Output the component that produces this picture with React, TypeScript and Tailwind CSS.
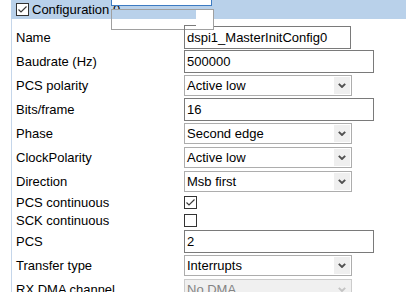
import type { ReactNode } from "react";

type Field =
  | { kind: "text"; label: string; value: string; short?: boolean }
  | { kind: "select"; label: string; value: string; disabled?: boolean }
  | { kind: "check"; label: string; checked: boolean };

const fields: Field[] = [
  { kind: "text", label: "Name", value: "dspi1_MasterInitConfig0", short: true },
  { kind: "text", label: "Baudrate (Hz)", value: "500000" },
  { kind: "select", label: "PCS polarity", value: "Active low" },
  { kind: "text", label: "Bits/frame", value: "16" },
  { kind: "select", label: "Phase", value: "Second edge" },
  { kind: "select", label: "ClockPolarity", value: "Active low" },
  { kind: "select", label: "Direction", value: "Msb first" },
  { kind: "check", label: "PCS continuous", checked: true },
  { kind: "check", label: "SCK continuous", checked: false },
  { kind: "text", label: "PCS", value: "2" },
  { kind: "select", label: "Transfer type", value: "Interrupts" },
  { kind: "select", label: "RX DMA channel", value: "No DMA", disabled: true },
];

const Tick = () => (
  <svg width="11" height="11" viewBox="0 0 11 11" className="block">
    <polyline points="1.5,5.5 4,8 9.5,2.5" fill="none" stroke="#3a3a3a" strokeWidth="1.2" />
  </svg>
);

const CheckBox = ({ checked }: { checked: boolean }) => (
  <div className="flex h-[13px] w-[13px] items-center justify-center border border-[#333333] bg-white">
    {checked && <Tick />}
  </div>
);

const Chevron = ({ color }: { color: string }) => (
  <svg width="8" height="5" viewBox="0 0 8 5" className="block">
    <polyline points="0.8,0.8 4,4 7.2,0.8" fill="none" stroke={color} strokeWidth="1.9" />
  </svg>
);

const TextBox = ({ value, short }: { value: string; short?: boolean }) => (
  <div
    className={`flex h-[23px] items-center border border-[#7a7a7a] bg-white px-[2px] text-black ${
      short ? "w-[167px]" : "w-[190px]"
    }`}
  >
    {value}
  </div>
);

const SelectBox = ({ value, disabled }: { value: string; disabled?: boolean }) => (
  <div
    className={`flex h-[21px] w-[168px] items-center justify-between border pl-[2px] ${
      disabled ? "border-[#cccccc] bg-[#f0f0f0] text-[#838383]" : "border-[#adadad] bg-white text-black"
    }`}
  >
    <span>{value}</span>
    <div
      className={`my-[1px] mr-[1px] flex h-[17px] w-[16px] items-center justify-center ${
        disabled ? "bg-[#f0f0f0]" : "bg-[#efefef]"
      }`}
    >
      <Chevron color={disabled ? "#c4c4c4" : "#505050"} />
    </div>
  </div>
);

const Row = ({ label, tall, children }: { label: string; tall: boolean; children: ReactNode }) => (
  <div className={`flex items-center ${tall ? "h-[24px]" : "h-[18px]"}`}>
    <div className="w-[168px] text-black">{label}</div>
    {children}
  </div>
);

export default function App() {
  return (
    <div className="relative h-[292px] w-[406px] overflow-hidden bg-white text-[13px] leading-none [font-family:'Liberation_Sans',Arial,sans-serif]">
      <div className="ml-[11px] flex h-[19px] items-center bg-[#b9d1ea] pl-[5px]">
        <CheckBox checked />
        <span className="ml-[3px] text-black">Configuration 0</span>
      </div>
      <div className="ml-[11px] border-l border-[#c5d6ea] pl-[4px] pt-[6px]">
        {fields.map((f) => (
          <Row key={f.label} label={f.label} tall={f.kind !== "check"}>
            {f.kind === "text" && <TextBox value={f.value} short={f.short} />}
            {f.kind === "select" && <SelectBox value={f.value} disabled={f.disabled} />}
            {f.kind === "check" && <CheckBox checked={f.checked} />}
          </Row>
        ))}
      </div>

      {/* leftover in-place editor frames drawn over the header */}
      <div className="absolute left-[111px] top-[-1px] h-[7px] w-[101px] border border-[#3d7bc2] bg-white" />
      <div className="absolute left-[111px] top-[9px] h-[21px] w-[103px] border border-[#a0a0a0] bg-white">
        <div className="absolute left-0 top-0 h-[9px] w-[84px] bg-[#b9d1ea]" />
        <div className="absolute left-[72px] top-[15px] h-[5px] w-[12px] border-l border-t border-[#7a7a7a]" />
      </div>
    </div>
  );
}
